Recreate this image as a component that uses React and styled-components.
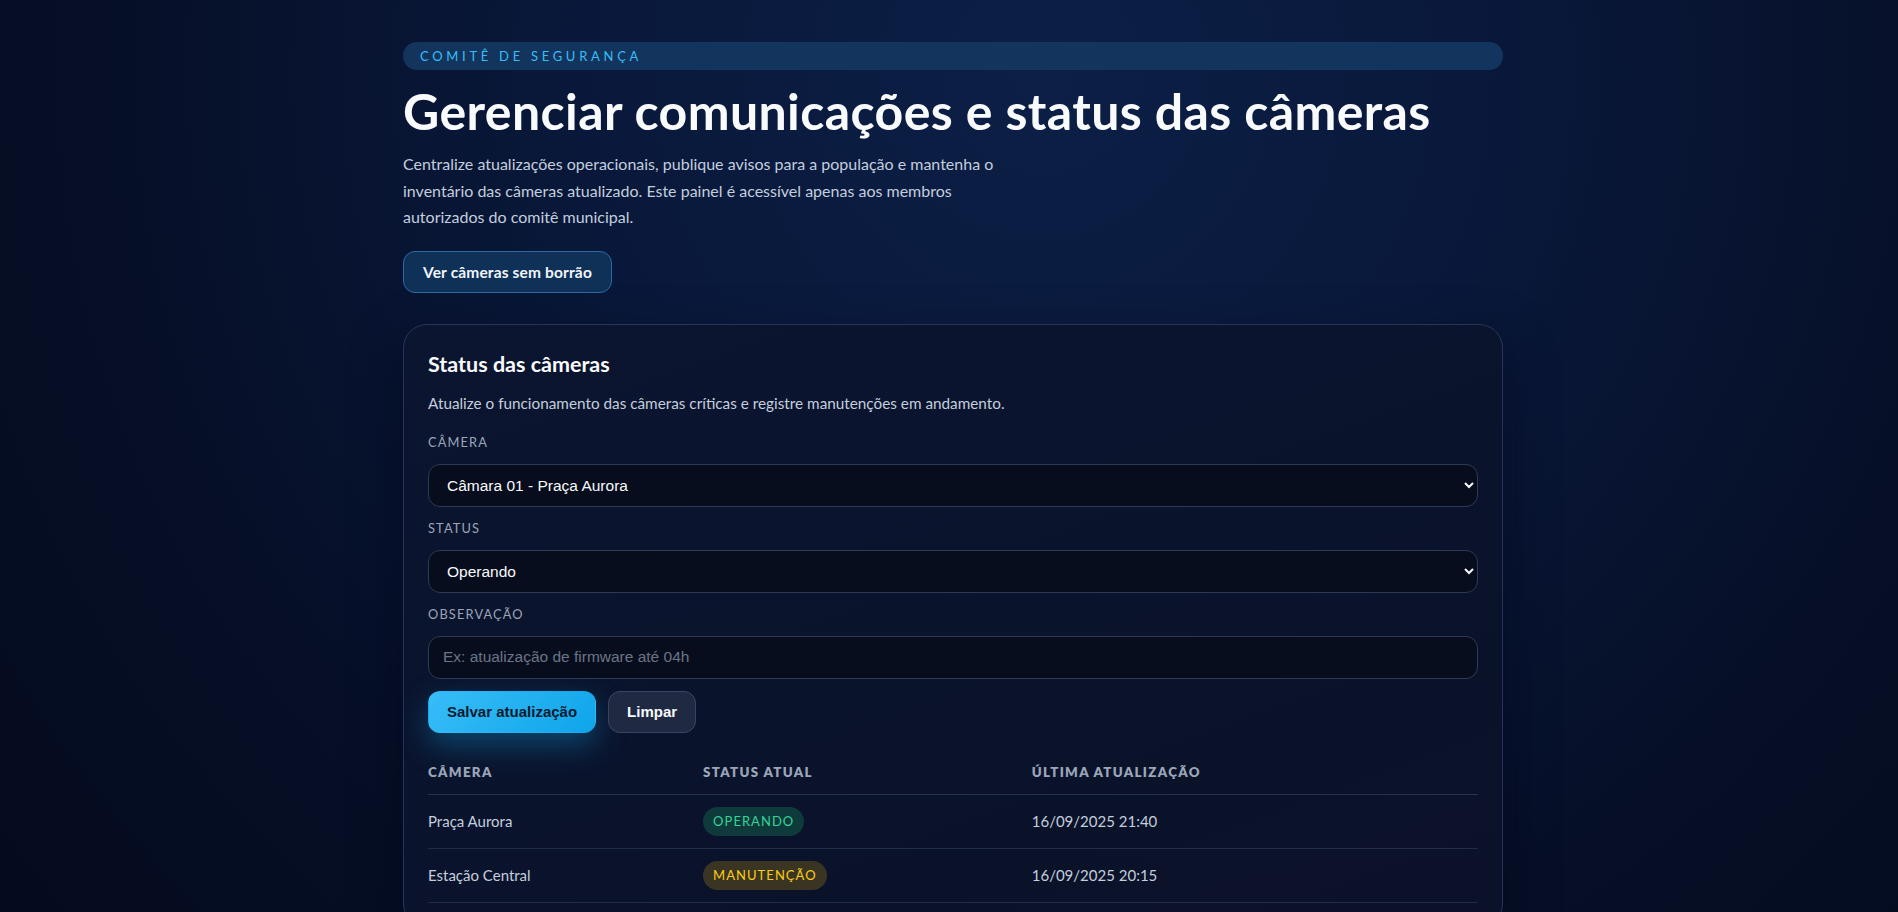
import React, { useState } from "react";
import styled, { createGlobalStyle } from "styled-components";

const GlobalStyle = createGlobalStyle`
  * { box-sizing: border-box; }
  html, body { margin: 0; padding: 0; }
  body {
    min-height: 100vh;
    font-family: Lato, "Noto Sans", sans-serif;
    color: #e2e8f0;
    background: radial-gradient(circle at 55% 8%, #0c1f46 0%, #09183a 35%, #060f27 70%, #050b1e 100%);
    background-attachment: fixed;
  }
`;

const Page = styled.main`
  width: 1100px;
  margin: 0 0 0 calc(50% - 546px);
  padding: 42px 0 48px;
`;

const Eyebrow = styled.div`
  background: #13355d;
  border-radius: 999px;
  height: 28px;
  padding: 0 17px;
  display: flex;
  align-items: center;
  color: #38bdf8;
  font-size: 13px;
  letter-spacing: 0.285em;
  text-transform: uppercase;
`;

const Title = styled.h1`
  margin: 13px 0 0;
  font-size: 50px;
  line-height: 1.12;
  font-weight: 700;
  letter-spacing: 0.4px;
  color: #f8fafc;
`;

const Lead = styled.p`
  margin: 12px 0 0;
  max-width: 620px;
  font-size: 16px;
  line-height: 26.5px;
  color: #c3cede;
`;

const GhostLink = styled.a`
  display: inline-flex;
  align-items: center;
  margin-top: 20px;
  height: 42px;
  padding: 0 19px;
  border-radius: 12px;
  border: 1px solid #2b6aa3;
  background: #0f3158;
  color: #f1f5f9;
  font-size: 15.5px;
  font-weight: 700;
  letter-spacing: 0.01em;
  text-decoration: none;
`;

const Card = styled.section`
  margin-top: 31px;
  padding: 24px;
  border-radius: 24px;
  border: 1px solid #26345a;
  background: linear-gradient(160deg, #0c1530 0%, #0a132b 60%, #0b1128 100%);
  box-shadow: 0 20px 50px rgba(2, 6, 23, 0.5);
`;

const CardTitle = styled.h2`
  margin: 0;
  font-size: 21.5px;
  line-height: 30px;
  font-weight: 700;
  color: #f8fafc;
`;

const CardText = styled.p`
  margin: 13px 0 19px;
  font-size: 15.3px;
  line-height: 22px;
  color: #c3cede;
`;

const Form = styled.form`
  display: grid;
  gap: 12px;
`;

const Label = styled.label`
  display: block;
  font-size: 12.8px;
  line-height: 19px;
  letter-spacing: 0.09em;
  text-transform: uppercase;
  color: #9aa6b8;
`;

const fieldCss = `
  width: 100%;
  height: 43px;
  padding: 0 14px;
  border-radius: 12px;
  border: 1px solid #2d3a55;
  background: #070d1c;
  color: #f8fafc;
  font-family: "Liberation Sans", Arial, sans-serif;
  font-size: 15.5px;
  color-scheme: dark;
  outline: none;
`;

const Select = styled.select`
  ${fieldCss}
  padding: 0 10px 0 14px;
`;

const Input = styled.input`
  ${fieldCss}
  &::placeholder { color: #6b7588; }
`;

const Actions = styled.div`
  display: flex;
  gap: 12px;
  margin-top: 0;
`;

const Button = styled.button`
  height: 42px;
  padding: 0 18px;
  border-radius: 12px;
  font-family: "Liberation Sans", Arial, sans-serif;
  font-size: 15px;
  font-weight: 700;
  cursor: pointer;
  border: 1px solid ${(p) => (p.$primary ? "transparent" : "#3a465f")};
  background: ${(p) => (p.$primary ? "linear-gradient(135deg, #38bdf8, #0ea5e9)" : "#1f2a42")};
  color: ${(p) => (p.$primary ? "#0b1a2e" : "#f8fafc")};
  box-shadow: ${(p) => (p.$primary ? "0 12px 30px rgba(14, 165, 233, 0.35)" : "none")};
`;

const Table = styled.table`
  width: 100%;
  margin-top: 17px;
  border-collapse: collapse;
`;

const Th = styled.th`
  text-align: left;
  padding: 12px 0;
  font-size: 13.3px;
  line-height: 20px;
  font-weight: 800;
  letter-spacing: 0.1em;
  text-transform: uppercase;
  color: #9aa6b8;
  border-bottom: 1px solid #27324b;
  width: ${(p) => p.$w || "auto"};
`;

const Td = styled.td`
  padding: 12px 0;
  height: 53px;
  font-size: 15px;
  color: #c3cede;
  border-bottom: 1px solid #202b44;
`;

const badgeTones = {
  ok: { bg: "#0f3a3c", fg: "#34d399" },
  warn: { bg: "#3a3522", fg: "#facc15" },
};

const Badge = styled.span`
  display: inline-flex;
  align-items: center;
  height: 29px;
  padding: 0 10px;
  border-radius: 999px;
  font-size: 13px;
  letter-spacing: 0.08em;
  text-transform: uppercase;
  background: ${(p) => badgeTones[p.$tone].bg};
  color: ${(p) => badgeTones[p.$tone].fg};
`;

const cameras = [
  { name: "Praça Aurora", status: "Operando", tone: "ok", at: "16/09/2025 21:40" },
  { name: "Estação Central", status: "Manutenção", tone: "warn", at: "16/09/2025 20:15" },
];

export default function App() {
  const [note, setNote] = useState("");

  return (
    <>
      <GlobalStyle />
      <Page>
        <Eyebrow>Comitê de Segurança</Eyebrow>
        <Title>Gerenciar comunicações e status das câmeras</Title>
        <Lead>
          Centralize atualizações operacionais, publique avisos para a população e mantenha o
          inventário das câmeras atualizado. Este painel é acessível apenas aos membros
          autorizados do comitê municipal.
        </Lead>
        <GhostLink href="#">Ver câmeras sem borrão</GhostLink>

        <Card>
          <CardTitle>Status das câmeras</CardTitle>
          <CardText>Atualize o funcionamento das câmeras críticas e registre manutenções em andamento.</CardText>

          <Form onSubmit={(e) => e.preventDefault()}>
            <Label htmlFor="cam">Câmera</Label>
            <Select id="cam" defaultValue="01">
              <option value="01">Câmara 01 - Praça Aurora</option>
              <option value="02">Câmara 02 - Estação Central</option>
            </Select>
            <Label htmlFor="status">Status</Label>
            <Select id="status" defaultValue="op">
              <option value="op">Operando</option>
              <option value="man">Manutenção</option>
            </Select>
            <Label htmlFor="obs">Observação</Label>
            <Input
              id="obs"
              value={note}
              onChange={(e) => setNote(e.target.value)}
              placeholder="Ex: atualização de firmware até 04h"
            />
            <Actions>
              <Button type="submit" $primary>Salvar atualização</Button>
              <Button type="button" onClick={() => setNote("")}>Limpar</Button>
            </Actions>
          </Form>

          <Table>
            <thead>
              <tr>
                <Th $w="26.2%">Câmera</Th>
                <Th $w="31.3%">Status atual</Th>
                <Th>Última atualização</Th>
              </tr>
            </thead>
            <tbody>
              {cameras.map((c) => (
                <tr key={c.name}>
                  <Td>{c.name}</Td>
                  <Td><Badge $tone={c.tone}>{c.status}</Badge></Td>
                  <Td>{c.at}</Td>
                </tr>
              ))}
            </tbody>
          </Table>
        </Card>
      </Page>
    </>
  );
}
